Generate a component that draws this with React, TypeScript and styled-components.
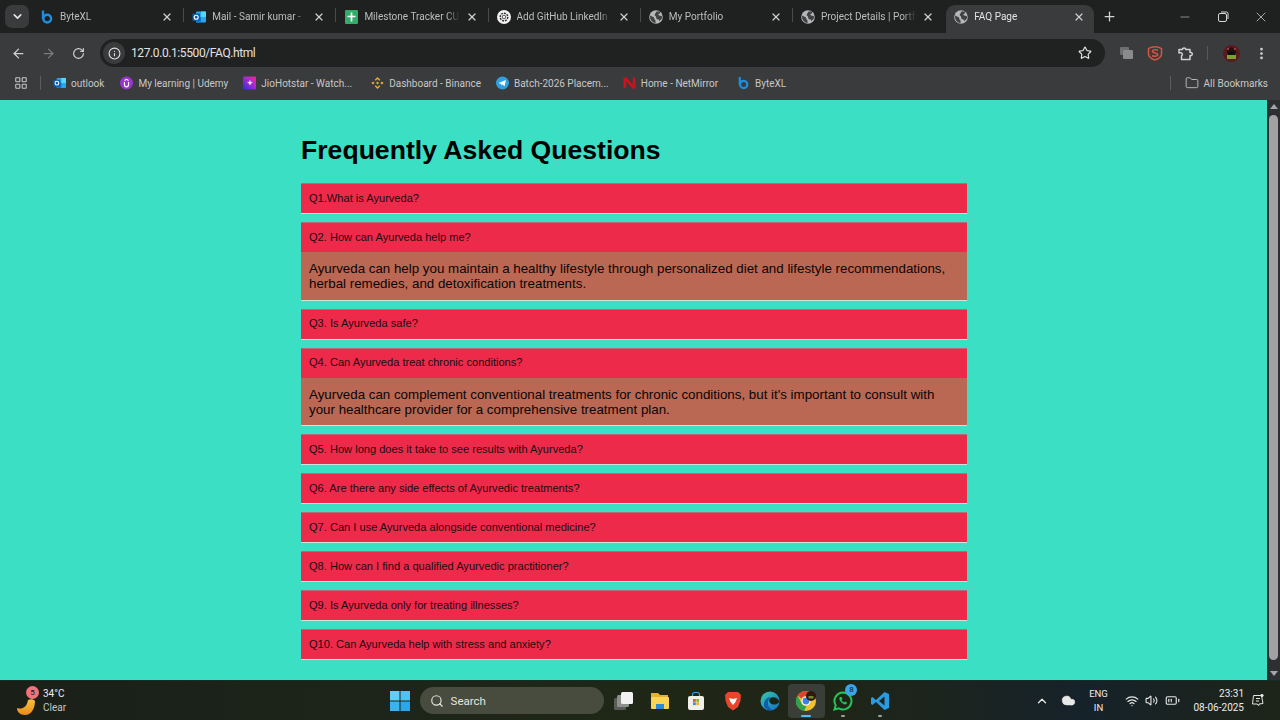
import React from "react";
import styled, { createGlobalStyle } from "styled-components";
import {
  ArrowLeft,
  ArrowRight,
  RotateCw,
  Info,
  Star,
  Plus,
  X,
  Minus,
  Folder,
  LayoutGrid,
  ChevronDown,
  ChevronUp,
  Search,
  Wifi,
  Volume2,
  BatteryMedium,
  Cloud,
  MoreVertical,
} from "lucide-react";

const UI_FONT = `Roboto, "Open Sans", sans-serif`;

const GlobalStyle = createGlobalStyle`
  html, body {
    margin: 0;
    padding: 0;
    height: 720px;
    overflow: hidden;
    background: #3adfc4;
  }
  * { box-sizing: border-box; }
`;

const Screen = styled.div`
  width: 1280px;
  height: 720px;
  display: flex;
  flex-direction: column;
  font-family: ${UI_FONT};
`;

/* browser chrome */
const TabStrip = styled.div`
  height: 33px;
  background: #1f2020;
  display: flex;
  align-items: flex-end;
  padding-left: 5px;
  flex-shrink: 0;
`;

const TabMenu = styled.div`
  width: 24px;
  height: 23px;
  margin: 0 3px 5px 0;
  border-radius: 7px;
  background: #3a3b3c;
  color: #e3e3e3;
  display: flex;
  align-items: center;
  justify-content: center;
`;

const Tab = styled.div<{ $active?: boolean; $sep?: boolean }>`
  position: relative;
  width: ${(p) => (p.$active ? "148px" : "152.2px")};
  height: 28px;
  margin-left: ${(p) => (p.$active ? "1px" : "0")};
  padding: 0 ${(p) => (p.$active ? "8px" : "10px")} 5px 8px;
  display: flex;
  align-items: center;
  gap: 6px;
  font-size: 10px;
  color: ${(p) => (p.$active ? "#e4e4e4" : "#bdbdbd")};
  background: ${(p) => (p.$active ? "#3a3b3c" : "transparent")};
  border-radius: ${(p) => (p.$active ? "9px 9px 0 0" : "0")};
  &::after {
    content: "";
    display: ${(p) => (p.$sep ? "block" : "none")};
    position: absolute;
    right: 0;
    top: 3px;
    width: 1px;
    height: 14px;
    background: #4a4b4c;
  }
`;

const TabIcon = styled.span`
  width: 14px;
  height: 14px;
  flex-shrink: 0;
  display: flex;
  align-items: center;
  justify-content: center;
`;

const TabTitle = styled.span`
  flex: 1;
  min-width: 0;
  white-space: nowrap;
  overflow: hidden;
  -webkit-mask-image: linear-gradient(to right, #000 86%, transparent);
  mask-image: linear-gradient(to right, #000 86%, transparent);
`;

const TabClose = styled(X)`
  flex-shrink: 0;
  color: #d0d0d0;
  margin-right: 1px;
`;

const NewTab = styled.div`
  width: 30px;
  height: 28px;
  padding-bottom: 5px;
  color: #d4d4d4;
  display: flex;
  align-items: center;
  justify-content: center;
`;

const WindowControls = styled.div`
  margin-left: auto;
  display: flex;
  height: 33px;
  align-self: flex-start;
`;

const WindowButton = styled.div`
  width: 38px;
  height: 33px;
  color: #d8d8d8;
  display: flex;
  align-items: center;
  justify-content: center;
`;

const Toolbar = styled.div`
  height: 34px;
  background: #3a3b3c;
  display: flex;
  align-items: center;
  padding: 6px 8px 0 3px;
  flex-shrink: 0;
`;

const NavButton = styled.div<{ $dim?: boolean }>`
  width: 30px;
  height: 28px;
  display: flex;
  align-items: center;
  justify-content: center;
  color: ${(p) => (p.$dim ? "#7a7b7c" : "#cfd0d1")};
`;

const Omnibox = styled.div`
  width: 1005px;
  height: 28px;
  margin-left: 7px;
  border-radius: 14px;
  background: #202121;
  display: flex;
  align-items: center;
  padding: 0 13px 0 3px;
  color: #e3e3e3;
  font-size: 12px;
  letter-spacing: -0.4px;
`;

const SiteInfo = styled.div`
  width: 22px;
  height: 22px;
  margin-right: 6px;
  border-radius: 50%;
  background: #3a3b3c;
  display: flex;
  align-items: center;
  justify-content: center;
  color: #e3e3e3;
`;

const Url = styled.span`
  flex: 1;
`;

const ToolIcons = styled.div`
  flex: 1;
  display: flex;
  align-items: center;
  justify-content: space-between;
  padding: 0 3px 0 15px;
  color: #d0d1d2;
`;

const ToolDivider = styled.div`
  width: 1px;
  height: 14px;
  background: #58595a;
`;

const BookmarkBar = styled.div`
  height: 33px;
  padding: 0 12px 1px 14px;
  background: #3a3b3c;
  display: flex;
  align-items: center;
  font-size: 10px;
  color: #c8c8c8;
  flex-shrink: 0;
`;

const AppsDivider = styled.div<{ $right?: boolean }>`
  width: 1px;
  height: 14px;
  background: #5c5d5e;
  margin: ${(p) => (p.$right ? "0 14px 0 auto" : "0 12px 0 12px")};
`;

const Bookmark = styled.div<{ $after?: number }>`
  display: flex;
  align-items: center;
  gap: 5px;
  margin-right: ${(p) => p.$after ?? 0}px;
  white-space: nowrap;
`;

const BookmarkIcon = styled.span`
  width: 13px;
  height: 14px;
  display: flex;
  align-items: center;
  justify-content: center;
  flex-shrink: 0;
`;

/* page */
const Viewport = styled.div`
  flex: 1;
  min-height: 0;
  display: flex;
  background: #3adfc4;
`;

const Page = styled.main`
  flex: 1;
  padding: 31px 0 0 301px;
  font-family: "Liberation Sans", Arial, sans-serif;
  color: #000;
`;

const Heading = styled.h1`
  margin: 0 0 14px;
  font-size: 26.6px;
  line-height: 38px;
  font-weight: 700;
`;

const FaqList = styled.div`
  width: 666px;
  display: flex;
  flex-direction: column;
  gap: 8px;
`;

const FaqItem = styled.section`
  display: flex;
  flex-direction: column;
  border-top: 1px solid #b96a74;
  border-bottom: 1px solid #c4e6dd;
`;

const Question = styled.div`
  height: 29px;
  padding: 0 8px 2px;
  background: #ee2a4b;
  display: flex;
  align-items: center;
  font-size: 11.08px;
  color: #1b0a10;
`;

const Answer = styled.div`
  height: 47.5px;
  padding: 9px 8px 0;
  background: #ba6853;
  font-size: 13.33px;
  line-height: 15px;
  color: #0a0504;
`;

const Scrollbar = styled.div`
  width: 13px;
  background: #2e2f30;
  display: flex;
  flex-direction: column;
  align-items: center;
  flex-shrink: 0;
`;

const ScrollArrow = styled.div<{ $down?: boolean }>`
  width: 0;
  height: 0;
  margin: ${(p) => (p.$down ? "auto 0 4px" : "4px 0 4px")};
  border-left: 4px solid transparent;
  border-right: 4px solid transparent;
  border-bottom: ${(p) => (p.$down ? "0" : "5px solid #a6a6a6")};
  border-top: ${(p) => (p.$down ? "5px solid #a6a6a6" : "0")};
`;

const ScrollThumb = styled.div`
  width: 9px;
  height: 545px;
  margin-top: 2px;
  border-radius: 5px;
  background: #a2a2a3;
`;

/* taskbar */
const Taskbar = styled.footer`
  height: 40px;
  background: linear-gradient(90deg, #1a2018 0%, #1d2419 30%, #1f2717 48%, #1f2516 65%, #16222a 85%, #1e2418 100%);
  border-top: 1px solid #123029;
  display: grid;
  grid-template-columns: 1fr auto 1fr;
  align-items: center;
  flex-shrink: 0;
  color: #ececec;
`;

const Weather = styled.div`
  display: flex;
  align-items: center;
  gap: 5px;
  padding-left: 16px;
`;

const WeatherIcon = styled.div`
  position: relative;
  width: 22px;
  height: 30px;
`;

const AlertBadge = styled.span`
  position: absolute;
  top: 0;
  right: -1px;
  width: 13px;
  height: 13px;
  border-radius: 50%;
  background: #f0727e;
  color: #1c1010;
  font-size: 8px;
  line-height: 13px;
  text-align: center;
`;

const WeatherText = styled.div`
  font-size: 10px;
  line-height: 13.5px;
`;

const MutedLine = styled.div`
  color: #c6c8c4;
`;

const Center = styled.div`
  display: flex;
  align-items: center;
`;

const TaskSlot = styled.div<{ $active?: boolean }>`
  position: relative;
  width: 36.7px;
  height: 34px;
  border-radius: 4px;
  display: flex;
  align-items: center;
  justify-content: center;
  background: ${(p) => (p.$active ? "#3b3d38" : "transparent")};
`;

const RunningMark = styled.span<{ $active?: boolean }>`
  position: absolute;
  bottom: 1px;
  left: 50%;
  transform: translateX(-50%);
  width: ${(p) => (p.$active ? 10 : 4)}px;
  height: 2px;
  border-radius: 1px;
  background: ${(p) => (p.$active ? "#4cc2ff" : "#a0a0a0")};
`;

const CountBadge = styled.span`
  position: absolute;
  top: 0;
  right: 4px;
  width: 12px;
  height: 12px;
  border-radius: 50%;
  background: #3aa5e8;
  color: #0d1a22;
  font-size: 8px;
  line-height: 12px;
  text-align: center;
`;

const SearchBox = styled.div`
  width: 184px;
  height: 27px;
  margin: 0 1px 0 1px;
  padding-left: 10px;
  border-radius: 14px;
  background: #484c3e;
  color: #e4e4e0;
  display: flex;
  align-items: center;
  gap: 7px;
  font-size: 11.5px;
`;

const Tray = styled.div`
  justify-self: end;
  display: flex;
  align-items: center;
  padding-right: 15px;
`;

const TrayIcon = styled.span<{ $gap?: number }>`
  display: flex;
  align-items: center;
  margin-right: ${(p) => p.$gap ?? 0}px;
  color: #e8e8e8;
`;

const LangBox = styled.div`
  width: 22px;
  margin-right: 15px;
  text-align: center;
  font-size: 9.5px;
  line-height: 14px;
`;

const ClockBox = styled.div`
  margin-right: 7px;
  text-align: right;
  font-size: 10px;
  line-height: 14px;
`;

/* logos */
const ByteLogo = ({ size = 14 }: { size?: number }) => (
  <svg width={size} height={size} viewBox="0 0 14 14" fill="none">
    <path d="M3 0.5V9" stroke="#1d8fe0" strokeWidth="2.4" />
    <circle cx="7.2" cy="8.6" r="3.9" stroke="#1d8fe0" strokeWidth="2.4" />
  </svg>
);

const GlobeIcon = () => (
  <svg width="14" height="14" viewBox="0 0 14 14">
    <circle cx="7" cy="7" r="6.8" fill="#b4b6b8" />
    <path d="M1.2 5.5 5 7.5l.5 2 1 .8V13.300A6.500 6.500 0 0 1 1.200 5.500zM7.500 1.500h3.300l.4 1.500-2 1.200.8 1.300 2.500.6.8 1A5.500 5.500 0 0 1 10.500 11l-1-1.500-2-.5-.5-2.500L5.500 5z" fill="#3f4142" />
  </svg>
);

const OutlookLogo = () => (
  <svg width="14" height="14" viewBox="0 0 14 14">
    <rect x="4" y="1.5" width="10" height="11" rx="1" fill="#28a8ea" />
    <rect x="9" y="1.5" width="5" height="5.5" fill="#50d9ff" />
    <rect x="4" y="7" width="5" height="5.5" fill="#0f78d4" />
    <rect x="0.5" y="3.5" width="7.5" height="7.5" rx="1" fill="#0a5fb0" />
    <circle cx="4.2" cy="7.2" r="2" fill="none" stroke="#fff" strokeWidth="1.1" />
  </svg>
);

const SheetsLogo = () => (
  <svg width="13" height="14" viewBox="0 0 13 14">
    <rect width="13" height="14" rx="1" fill="#2fae6a" />
    <path d="M6.5 2.5v9M2.500 6.500h8" stroke="#fff" strokeWidth="1.7" />
  </svg>
);

const OpenAiLogo = () => (
  <svg width="14" height="14" viewBox="0 0 14 14">
    <circle cx="7" cy="7" r="7" fill="#f2f2f2" />
    <circle cx="7" cy="7" r="3.8" fill="none" stroke="#333" strokeWidth="1.4" strokeDasharray="2 0.9" />
    <circle cx="7" cy="7" r="1.8" fill="none" stroke="#444" strokeWidth="0.9" />
  </svg>
);

const UdemyLogo = () => (
  <svg width="14" height="14" viewBox="0 0 14 14">
    <circle cx="7" cy="7" r="7" fill="#9a35d0" />
    <path d="M4.8 6v3a2.200 2.200 0 0 0 4.400 0V6M4.800 4.400 7 3l2.200 1.400" fill="none" stroke="#fff" strokeWidth="1.2" />
  </svg>
);

const HotstarLogo = () => (
  <svg width="14" height="14" viewBox="0 0 14 14">
    <defs>
      <linearGradient id="hot" x1="0" y1="1" x2="1" y2="0">
        <stop offset="0" stopColor="#2a2ee0" />
        <stop offset="0.6" stopColor="#b02ad0" />
        <stop offset="1" stopColor="#f02a80" />
      </linearGradient>
    </defs>
    <rect width="14" height="14" rx="1" fill="url(#hot)" />
    <path d="M7.5 3.5 8.300 6l2.400.8-2.400.8-.8 2.400-.8-2.400-2.400-.8 2.400-.8z" fill="#fff" />
  </svg>
);

const BinanceLogo = () => (
  <svg width="14" height="14" viewBox="0 0 14 14" fill="#e6ae24">
    <path d="M7 0.5 10 3.500 8.900 4.600 7 2.700 5.100 4.600 4 3.500zM7 13.500 4 10.500l1.100-1.100L7 11.300l1.900-1.900 1.100 1.100zM0.500 7l1.700-1.700L3.900 7 2.200 8.700zM10.100 7l1.700-1.700L13.500 7l-1.700 1.700zM7 5.400 8.600 7 7 8.600 5.400 7z" />
  </svg>
);

const TelegramLogo = () => (
  <svg width="14" height="14" viewBox="0 0 14 14">
    <circle cx="7" cy="7" r="7" fill="#2f9fe0" />
    <path d="M2.8 6.9 10.600 3.800 9.400 10.400 6.800 8.600 5.700 9.800 5.500 8z" fill="#fff" />
  </svg>
);

const NetflixLogo = () => (
  <svg width="14" height="14" viewBox="0 0 14 14" fill="#d0101c">
    <path d="M0.5 1h3.500L13.500 13H10zM0.500 1h3v10.500l-3 1.500zM10.500 1h3v12l-3-4z" />
  </svg>
);

const SnykLogo = () => (
  <svg width="16" height="16" viewBox="0 0 16 16" fill="none" stroke="#d9533f">
    <path d="M1.5 3.5C5 1 11 1 14.500 3.500V9c0 3-3.500 5-6.500 6-3-1-6.500-3-6.500-6z" strokeWidth="1.5" />
    <path d="M11 5.2C8 4 5 5 5.500 6.800 6 8.500 10.500 7.500 10.800 9.500 11 11 8 11.800 5 10.800" strokeWidth="1.5" />
  </svg>
);

const ExtensionIcon = () => (
  <svg width="15" height="15" viewBox="0 0 15 15" fill="none" stroke="currentColor" strokeWidth="1.5" strokeLinejoin="round">
    <path d="M1 3.5h3.500a1.600 1.600 0 0 1 3.200 0h4.300v3a1.600 1.600 0 0 1 2.300 1.500 1.600 1.600 0 0 1-2.300 1.500V13.500H3.500V9.800a1.600 1.600 0 0 0-1-3A1.600 1.600 0 0 0 1 7z" />
  </svg>
);

const Avatar = () => (
  <svg width="17" height="17" viewBox="0 0 17 17">
    <circle cx="8.5" cy="8.5" r="8.5" fill="#5a1a1c" />
    <path d="M4 5l4.500-3L13 5v3H4z" fill="#1b1414" />
    <rect x="4" y="10" width="9" height="4" fill="#7ca02c" />
    <rect x="5" y="7" width="7" height="3" fill="#0e0e0e" />
    <circle cx="5" cy="4" r="1" fill="#c8423a" />
    <circle cx="12" cy="4" r="1" fill="#c8423a" />
  </svg>
);

const TabGroupIcon = () => (
  <svg width="13" height="12" viewBox="0 0 13 12" fill="#8a8b8c">
    <rect x="0" y="0" width="9" height="8" rx="1" fill="#6e6f70" />
    <rect x="3" y="3" width="10" height="9" rx="1" />
  </svg>
);

const Moon = () => (
  <svg width="22" height="26" viewBox="0 0 22 26" style={{ position: "absolute", left: 0, bottom: -1 }}>
    <defs>
      <linearGradient id="moon" x1="0" y1="0" x2="0" y2="1">
        <stop offset="0" stopColor="#f7c23c" />
        <stop offset="1" stopColor="#ea8a1c" />
      </linearGradient>
    </defs>
    <path d="M1 17c5 2 10-1 11-8 3-1 5-1 7 1 0 8-4 14-10 14-5 0-8-3-8-7z" fill="url(#moon)" />
  </svg>
);

const WindowsLogo = () => (
  <svg width="20" height="20" viewBox="0 0 20 20">
    <rect width="9.5" height="9.5" y="0" fill="#5fd0f5" />
    <rect x="10.5" width="9.5" height="9.5" fill="#4cc4f2" />
    <rect y="10.5" width="9.5" height="9.5" fill="#3bb4ee" />
    <rect x="10.5" y="10.5" width="9.5" height="9.5" fill="#2aa6ea" />
  </svg>
);

const TaskViewLogo = () => (
  <svg width="20" height="20" viewBox="0 0 20 20">
    <rect x="1" y="7" width="12" height="12" rx="1.5" fill="#5a5c58" />
    <rect x="4" y="4" width="12" height="12" rx="1.5" fill="#8e908c" />
    <rect x="8" y="1" width="12" height="12" rx="1.5" fill="#f2f2f2" />
  </svg>
);

const ExplorerLogo = () => (
  <svg width="20" height="20" viewBox="0 0 20 20">
    <path d="M1 2h7l2 2h8v4H1z" fill="#e6b12f" />
    <rect x="1" y="6" width="18" height="12" rx="1" fill="#fbd355" />
    <rect x="6" y="13" width="8" height="5" fill="#2a8ad8" />
  </svg>
);

const StoreLogo = () => (
  <svg width="20" height="20" viewBox="0 0 20 20">
    <path d="M6.5 5V3.500a2 2 0 0 1 2-2h3a2 2 0 0 1 2 2V5" fill="none" stroke="#3fa8e8" strokeWidth="1.2" />
    <rect x="2" y="5" width="16" height="14" rx="2" fill="#f0efe9" />
    <rect x="7" y="8" width="2.8" height="2.8" fill="#e8532e" />
    <rect x="10.3" y="8" width="2.8" height="2.8" fill="#7cb82e" />
    <rect x="7" y="11.3" width="2.8" height="2.8" fill="#2a9ae0" />
    <rect x="10.3" y="11.3" width="2.8" height="2.8" fill="#f2b41e" />
  </svg>
);

const BraveLogo = () => (
  <svg width="18" height="20" viewBox="0 0 18 20">
    <path d="M4 1h10l3 3-.6 6L14 16l-5 3.500L4 16 1.600 10 1 4z" fill="#e8462c" />
    <path d="M5 7l4 1 4-1-1.500 4L9 14l-2.500-3z" fill="#fff" />
  </svg>
);

const EdgeLogo = () => (
  <svg width="20" height="20" viewBox="0 0 20 20">
    <defs>
      <linearGradient id="edge" x1="0" y1="0" x2="1" y2="1">
        <stop offset="0" stopColor="#38c8a8" />
        <stop offset="1" stopColor="#1470c8" />
      </linearGradient>
    </defs>
    <circle cx="10" cy="10" r="9.5" fill="url(#edge)" />
    <path d="M19.5 11c-1-4-5-5.500-8-4.500-3 1-3 5 0 6.500 2 1 5 .5 6-.5z" fill="#1c2418" />
    <path d="M4 14c0-5 3-8 7-8-3 2-4 6-2 10 1 1.500 2.500 2.500 4 3-4 1-9-1-9-5z" fill="#0f5cab" />
  </svg>
);

const ChromeLogo = () => (
  <svg width="22" height="22" viewBox="0 0 22 22">
    <circle cx="11" cy="11" r="10" fill="#f2c22e" />
    <path d="M11 1a10 10 0 0 1 8.660 5H11a5 5 0 0 0-4.500 2.800L2.700 5.400A10 10 0 0 1 11 1z" fill="#e0432e" />
    <path d="M2.7 5.4 6.500 13.500a5 5 0 0 0 5 2.500L9 21A10 10 0 0 1 2.700 5.400z" fill="#2ea24e" />
    <circle cx="11" cy="11" r="4.5" fill="#fff" />
    <circle cx="11" cy="11" r="3.4" fill="#3a82ea" />
    <circle cx="16" cy="6" r="5" fill="#3a1214" />
    <rect x="13.5" y="6" width="5" height="2.5" fill="#6c8c28" />
  </svg>
);

const WhatsappLogo = () => (
  <svg width="20" height="20" viewBox="0 0 20 20">
    <path d="M10 1.5a8.500 8.500 0 0 0-7.300 12.800L1.500 18.500l4.300-1.100A8.500 8.500 0 1 0 10 1.500z" fill="none" stroke="#25c45a" strokeWidth="2" />
    <path d="M7 6c-1 1-1 3 1 5s4 3 5.500 2l.5-1.500-2-1-1 1c-1-.5-2-1.500-2.500-2.500l1-1-1-2z" fill="#25c45a" />
  </svg>
);

const VsCodeLogo = () => (
  <svg width="20" height="20" viewBox="0 0 20 20">
    <path d="M14.5 1 19 3v14l-4.500 2L6 11l-3.500 3L1 13V7l1.500-1L6 9z" fill="#2a9be0" />
    <path d="M14.5 5.5 9 10l5.500 4.500z" fill="#1c2418" />
  </svg>
);

const NotifyLogo = () => (
  <svg width="14" height="15" viewBox="0 0 14 15" fill="none" stroke="#e4e4e4" strokeWidth="1">
    <path d="M2.5 2.5h8l1.500 8-4 .5v1.500l-2-1.500H1.500z" />
    <path d="M5 5.5h4M5 8h3" />
    <circle cx="11" cy="2.5" r="1.2" fill="#e4e4e4" />
  </svg>
);

type TabData = { title: string; icon: React.ReactNode };
type BookmarkData = TabData & { after: number };

const tabs: TabData[] = [
  { title: "ByteXL", icon: <ByteLogo /> },
  { title: "Mail - Samir kumar -", icon: <OutlookLogo /> },
  { title: "Milestone Tracker CU", icon: <SheetsLogo /> },
  { title: "Add GitHub LinkedIn", icon: <OpenAiLogo /> },
  { title: "My Portfolio", icon: <GlobeIcon /> },
  { title: "Project Details | Portf", icon: <GlobeIcon /> },
  { title: "FAQ Page", icon: <GlobeIcon /> },
];

const bookmarks: BookmarkData[] = [
  { title: "outlook", icon: <OutlookLogo />, after: 16 },
  { title: "My learning | Udemy", icon: <UdemyLogo />, after: 15 },
  { title: "JioHotstar - Watch...", icon: <HotstarLogo />, after: 19 },
  { title: "Dashboard - Binance", icon: <BinanceLogo />, after: 15 },
  { title: "Batch-2026 Placem...", icon: <TelegramLogo />, after: 14 },
  { title: "Home - NetMirror", icon: <NetflixLogo />, after: 19 },
  { title: "ByteXL", icon: <ByteLogo />, after: 0 },
];

const faqs: { q: string; a?: string }[] = [
  { q: "Q1.What is Ayurveda?" },
  {
    q: "Q2. How can Ayurveda help me?",
    a: "Ayurveda can help you maintain a healthy lifestyle through personalized diet and lifestyle recommendations, herbal remedies, and detoxification treatments.",
  },
  { q: "Q3. Is Ayurveda safe?" },
  {
    q: "Q4. Can Ayurveda treat chronic conditions?",
    a: "Ayurveda can complement conventional treatments for chronic conditions, but it's important to consult with your healthcare provider for a comprehensive treatment plan.",
  },
  { q: "Q5. How long does it take to see results with Ayurveda?" },
  { q: "Q6. Are there any side effects of Ayurvedic treatments?" },
  { q: "Q7. Can I use Ayurveda alongside conventional medicine?" },
  { q: "Q8. How can I find a qualified Ayurvedic practitioner?" },
  { q: "Q9. Is Ayurveda only for treating illnesses?" },
  { q: "Q10. Can Ayurveda help with stress and anxiety?" },
];

export default function App() {
  return (
    <Screen>
      <GlobalStyle />
      <TabStrip>
        <TabMenu>
          <ChevronDown size={13} strokeWidth={3} />
        </TabMenu>
        {tabs.map((t, i) => (
          <Tab key={t.title} $active={i === 6} $sep={i < 5}>
            <TabIcon>{t.icon}</TabIcon>
            <TabTitle>{t.title}</TabTitle>
            <TabClose size={12} strokeWidth={2.4} />
          </Tab>
        ))}
        <NewTab>
          <Plus size={15} strokeWidth={2} />
        </NewTab>
        <WindowControls>
          <WindowButton>
            <Minus size={14} strokeWidth={1} />
          </WindowButton>
          <WindowButton>
            <svg width="11" height="11" viewBox="0 0 11 11" fill="none" stroke="currentColor">
              <rect x="0.5" y="2.5" width="8" height="8" rx="1.5" />
              <path d="M3 1h5.500A1.500 1.500 0 0 1 10 2.500V8" />
            </svg>
          </WindowButton>
          <WindowButton>
            <X size={16} strokeWidth={1.1} />
          </WindowButton>
        </WindowControls>
      </TabStrip>

      <Toolbar>
        <NavButton>
          <ArrowLeft size={15} strokeWidth={2} />
        </NavButton>
        <NavButton $dim>
          <ArrowRight size={15} strokeWidth={2} />
        </NavButton>
        <NavButton>
          <RotateCw size={13} strokeWidth={2.2} />
        </NavButton>
        <Omnibox>
          <SiteInfo>
            <Info size={13} strokeWidth={2} />
          </SiteInfo>
          <Url>127.0.0.1:5500/FAQ.html</Url>
          <Star size={14} strokeWidth={2} />
        </Omnibox>
        <ToolIcons>
          <TabGroupIcon />
          <SnykLogo />
          <ExtensionIcon />
          <ToolDivider />
          <Avatar />
          <MoreVertical size={15} strokeWidth={2.4} />
        </ToolIcons>
      </Toolbar>

      <BookmarkBar>
        <LayoutGrid size={14} strokeWidth={1.8} />
        <AppsDivider />
        {bookmarks.map((b) => (
          <Bookmark key={b.title} $after={b.after}>
            <BookmarkIcon>{b.icon}</BookmarkIcon>
            {b.title}
          </Bookmark>
        ))}
        <AppsDivider $right />
        <Bookmark>
          <Folder size={14} strokeWidth={1.5} />
          All Bookmarks
        </Bookmark>
      </BookmarkBar>

      <Viewport>
        <Page>
          <Heading>Frequently Asked Questions</Heading>
          <FaqList>
            {faqs.map((f) => (
              <FaqItem key={f.q}>
                <Question>{f.q}</Question>
                {f.a && <Answer>{f.a}</Answer>}
              </FaqItem>
            ))}
          </FaqList>
        </Page>
        <Scrollbar>
          <ScrollArrow />
          <ScrollThumb />
          <ScrollArrow $down />
        </Scrollbar>
      </Viewport>

      <Taskbar>
        <Weather>
          <WeatherIcon>
            <Moon />
            <AlertBadge>5</AlertBadge>
          </WeatherIcon>
          <WeatherText>
            <div>34°C</div>
            <MutedLine>Clear</MutedLine>
          </WeatherText>
        </Weather>
        <Center>
          <TaskSlot>
            <WindowsLogo />
          </TaskSlot>
          <SearchBox>
            <Search size={14} strokeWidth={2} />
            Search
          </SearchBox>
          <TaskSlot>
            <TaskViewLogo />
          </TaskSlot>
          <TaskSlot>
            <ExplorerLogo />
          </TaskSlot>
          <TaskSlot>
            <StoreLogo />
          </TaskSlot>
          <TaskSlot>
            <BraveLogo />
          </TaskSlot>
          <TaskSlot>
            <EdgeLogo />
          </TaskSlot>
          <TaskSlot $active>
            <ChromeLogo />
            <RunningMark $active />
          </TaskSlot>
          <TaskSlot>
            <WhatsappLogo />
            <CountBadge>8</CountBadge>
            <RunningMark />
          </TaskSlot>
          <TaskSlot>
            <VsCodeLogo />
            <RunningMark />
          </TaskSlot>
        </Center>
        <Tray>
          <TrayIcon $gap={12}>
            <ChevronUp size={14} strokeWidth={2.2} />
          </TrayIcon>
          <TrayIcon $gap={12}>
            <Cloud size={15} fill="#e8e8e8" strokeWidth={1} />
          </TrayIcon>
          <LangBox>
            <div>ENG</div>
            <div>IN</div>
          </LangBox>
          <TrayIcon $gap={6}>
            <Wifi size={14} strokeWidth={2} />
          </TrayIcon>
          <TrayIcon $gap={7}>
            <Volume2 size={13} strokeWidth={2} />
          </TrayIcon>
          <TrayIcon $gap={14}>
            <BatteryMedium size={15} strokeWidth={1.8} />
          </TrayIcon>
          <ClockBox>
            <div>23:31</div>
            <div>08-06-2025</div>
          </ClockBox>
          <TrayIcon>
            <NotifyLogo />
          </TrayIcon>
        </Tray>
      </Taskbar>
    </Screen>
  );
}
